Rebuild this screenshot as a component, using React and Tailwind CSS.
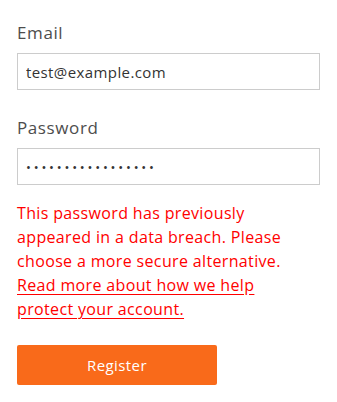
import React from "react";

const font = { fontFamily: '"Open Sans", "Liberation Sans", sans-serif' };

export default function App() {
  return (
    <div className="bg-white min-h-[402px] px-[17px] pt-[21px]" style={font}>
      <form onSubmit={(e) => e.preventDefault()} className="w-[303px]">
        <label htmlFor="email" className="block text-[17px] leading-[24px] tracking-[0.6px] text-[#4d4d4d] mb-[8px]">
          Email
        </label>
        <input
          id="email"
          type="email"
          readOnly
          value="test@example.com"
          className="block w-full h-[37px] border border-[#cccccc] px-[8px] text-[15px] tracking-[0.4px] text-[#333] outline-none"
        />

        <label htmlFor="password" className="block text-[17px] leading-[24px] tracking-[0.6px] text-[#4d4d4d] mt-[26px] mb-[8px]">
          Password
        </label>
        <input
          id="password"
          type="password"
          readOnly
          value="aaaaaaaaaaaaaaaaa"
          className="block w-full h-[37px] border border-[#cccccc] px-[8px] text-[13px] tracking-[2.8px] text-[#333] outline-none"
        />

        <p className="mt-[16px] text-[16px] leading-[24px] tracking-[0.35px] text-[#ff0000] whitespace-nowrap">
          This password has previously
          <br />
          appeared in a data breach. Please
          <br />
          choose a more secure alternative.
          <br />
          <a href="#" className="underline underline-offset-[3px]">
            Read more about how we help
            <br />
            protect your account.
          </a>
        </p>

        <button
          type="submit"
          className="mt-[24px] w-[200px] h-[40px] rounded-[2px] bg-[#f96a1a] text-white text-[15px] tracking-[0.4px]"
        >
          Register
        </button>
      </form>
    </div>
  );
}
